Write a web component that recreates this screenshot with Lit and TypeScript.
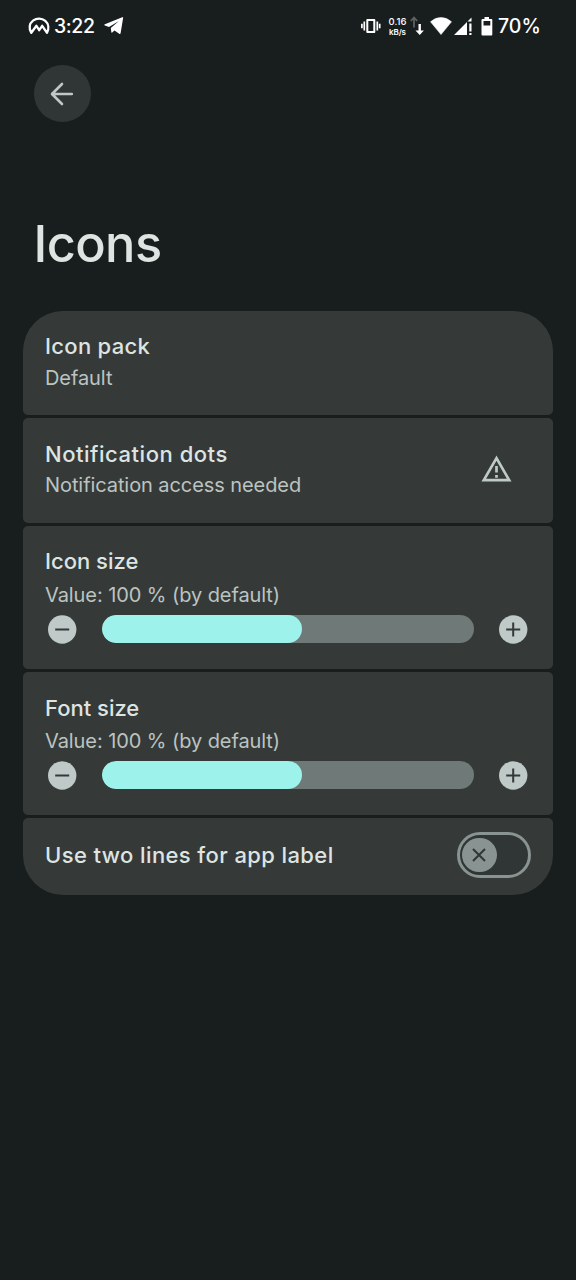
import { LitElement, html, css, svg } from 'lit';
import { customElement, property } from 'lit/decorators.js';

@customElement('status-bar')
class StatusBar extends LitElement {
  static styles = css`
    :host { display: flex; justify-content: space-between; height: 52px; padding: 0 36px 0 28px; color: #fff; font-family: Inter, sans-serif; box-sizing: border-box; }
    .side { display: flex; align-items: center; height: 52px; }
    svg { display: block; flex: none; }
    .time { font-size: 19.500px; font-weight: 450; letter-spacing: -0.400px; width: 41px; margin: 0 9px 0 4px; white-space: nowrap; }
    .rate { width: 21px; margin-left: 6px; text-align: center; font-size: 9.500px; line-height: 11px; font-weight: 500; white-space: nowrap; }
    .unit { font-size: 8px; font-weight: 600; line-height: 10px; letter-spacing: -0.100px; }
    .arrows { margin-left: 2px; }
    .wifi { margin-left: 6px; }
    .signal { margin-left: 2px; }
    .battery { margin-left: 9px; }
    .percent { width: 42px; margin-left: 5px; font-size: 19.500px; font-weight: 450; letter-spacing: 0; white-space: nowrap; }
  `;
  render() {
    return html`
      <div class="side">
        <svg width="22" height="18" viewBox="0 0 22 18"><path d="M3.300 15.800C.6 11.500 1.300 6.500 5 3.700 8.700 1 13.800 1 17.300 3.900 20.700 6.800 21.200 11.700 19 15.800L14.200 8.800 11.200 13.200 8.400 8.800Z" fill="none" stroke="#fff" stroke-width="2.300" stroke-linejoin="round"/><path d="M5.500 17.500 8.500 12.700 11.200 16.500 14 12.700 17 17.500Z" fill="#191e1d"/></svg>
        <span class="time">3:22</span>
        <svg width="20" height="18" viewBox="0 0 20 18"><path d="M19.200.6 16.600 16.300Q16.300 17.500 15.200 16.800L10.500 13.400 8.200 15.600Q7.500 16.200 7.300 15.100L6.800 11 14.900 3.900 5 9.900.9 8.600Q-.3 8 .9 7.300L18.200.3Q19.400-.1 19.200.6Z" fill="#fff"/></svg>
      </div>
      <div class="side">
        <svg width="21" height="16" viewBox="0 0 21 16"><path d="M7.300 2h7v12h-7z" fill="none" stroke="#fff" stroke-width="2" stroke-linejoin="round"/><path d="M4.300 3.500v9M1.900 5.800v4.400M17.300 3.500v9M19.700 5.800v4.400" stroke="#fff" stroke-width="1.700"/></svg>
        <div class="rate">0.16<div class="unit">kB/s</div></div>
        <svg class="arrows" width="14" height="20" viewBox="0 0 14 20"><path d="M4 11.500V2M.8 5 4 1.500 7.200 5" stroke="#5d6261" stroke-width="1.800" fill="none"/><path d="M8.500 8h2.400v6.500h3L9.700 19l-4.200-4.500h3z" fill="#fff"/></svg>
        <svg class="wifi" width="22" height="18" viewBox="0 0 22 18"><path d="M.5 4.800Q5 .5 11 .5T21.500 4.800L11 17.600Z" fill="#fff" stroke="#fff" stroke-width=".5" stroke-linejoin="round"/></svg>
        <svg class="signal" width="18" height="19" viewBox="0 0 18 19"><path d="M0 18 13 5v13zM13.500 4.500 17.500.5v4zM15.300 6.500h2.200v8h-2.200zM15.300 16h2.200v2h-2.200z" fill="#fff"/></svg>
        <svg class="battery" width="12" height="19" viewBox="0 0 12 19"><path fill-rule="evenodd" d="M3.500 0h4.500v2h2.300q1 0 1 1v14.500q0 1-1 1H1.500q-1 0-1-1V3q0-1 1-1h2zM2.500 4v4.500h6.800V4z" fill="#fff"/></svg>
        <span class="percent">70%</span>
      </div>`;
  }
}

@customElement('setting-slider')
class SettingSlider extends LitElement {
  @property({ type: Number }) fill = 0;
  static styles = css`
    :host { display: flex; align-items: center; height: 28.500px; margin: 8px 2px 0 2.500px; }
    .track { width: 372px; height: 28px; margin: 0 25px; border-radius: 14px; background: #6f7977; overflow: hidden; flex: none; }
    .level { height: 100%; border-radius: 14px; background: #9df2eb; }
    svg { display: block; flex: none; }
  `;
  private knob(plus: boolean) {
    return html`<svg width="29" height="29" viewBox="0 0 29 29"><circle cx="14.200" cy="14.500" r="14.200" fill="#bfc9c7"/><path d="M7.200 14.500h14" stroke="#333938" stroke-width="2"/>${plus ? svg`<path d="M14.200 7.500v14" stroke="#333938" stroke-width="2"/>` : ''}</svg>`;
  }
  render() {
    return html`${this.knob(false)}<div class="track"><div class="level" style="width:${this.fill}%"></div></div>${this.knob(true)}`;
  }
}

@customElement('app-root')
class AppRoot extends LitElement {
  static styles = css`
    :host { display: block; box-sizing: border-box; height: 1280px; background: #181e1d; color: #dee4e2; font-family: Inter, sans-serif; overflow: hidden; }
    .back { display: grid; place-items: center; width: 57px; height: 57px; margin: 13px 0 0 33.500px; border-radius: 50%; background: #303635; }
    h1 { margin: 92px 0 0 33.500px; height: 60px; line-height: 60px; font-size: 50.500px; font-weight: 500; letter-spacing: -0.600px; }
    .list { display: flex; flex-direction: column; gap: 3px; margin: 36.500px 23px 0; }
    .card { box-sizing: border-box; background: #353a39; border-radius: 5px; padding: 21.500px 22px 0; }
    .plain { height: 104.700px; }
    .sized { height: 143.200px; }
    .first { border-radius: 40px 40px 5px 5px; }
    .last { display: flex; align-items: flex-start; justify-content: space-between; height: 76.500px; padding: 14px 22.500px 0 22px; border-radius: 5px 5px 40px 40px; }
    .last .name { margin-top: 9px; }
    .split { display: flex; justify-content: space-between; }
    .name { height: 28px; line-height: 28px; font-size: 22px; font-weight: 500; white-space: nowrap; }
    .loose { letter-spacing: 0.300px; }
    .looser { letter-spacing: 0.400px; }
    .loosest { letter-spacing: 0.530px; }
    .note { height: 24px; line-height: 24px; margin-top: 5.500px; font-size: 20px; letter-spacing: -0.080px; color: #bcc3c1; white-space: nowrap; }
    .sized .note { margin-top: 7.500px; }
    .warn { margin: 15.500px 19px 0 0; }
    svg { display: block; }
    .toggle { box-sizing: border-box; width: 74px; height: 46px; padding: 2.500px; border: 3px solid #899391; border-radius: 23px; background: #303635; }
    .thumb { display: grid; place-items: center; width: 34.500px; height: 34.500px; border-radius: 50%; background: #899391; }
  `;
  private slider(name: string) {
    return html`<section class="card sized">
      <div class="name">${name}</div>
      <div class="note">Value: 100 % (by default)</div>
      <setting-slider .fill=${53.8}></setting-slider>
    </section>`;
  }
  render() {
    return html`
      <status-bar></status-bar>
      <div class="back"><svg width="24" height="24" viewBox="0 0 24 24"><path d="M21.800 12H2.500M12 2 2 12 12 22" fill="none" stroke="#c0c8c6" stroke-width="2.600" stroke-linejoin="round" stroke-linecap="round"/></svg></div>
      <h1>Icons</h1>
      <main class="list">
        <section class="card plain first">
          <div class="name loose">Icon pack</div>
          <div class="note">Default</div>
        </section>
        <section class="card plain split">
          <div>
            <div class="name loosest">Notification dots</div>
            <div class="note">Notification access needed</div>
          </div>
          <svg class="warn" width="31" height="28" viewBox="0 0 31 28"><path d="M15.500 3.200 28.200 25.200H2.800Z" fill="none" stroke="#bfc9c7" stroke-width="2.700"/><path d="M15.500 11v6.500M15.500 20v2.700" stroke="#bfc9c7" stroke-width="2.700"/></svg>
        </section>
        ${this.slider('Icon size')}
        ${this.slider('Font size')}
        <section class="card last">
          <div class="name looser">Use two lines for app label</div>
          <div class="toggle"><div class="thumb"><svg width="14" height="14" viewBox="0 0 14 14"><path d="M1 1 13 13M13 1 1 13" stroke="#303635" stroke-width="2"/></svg></div></div>
        </section>
      </main>`;
  }
}
